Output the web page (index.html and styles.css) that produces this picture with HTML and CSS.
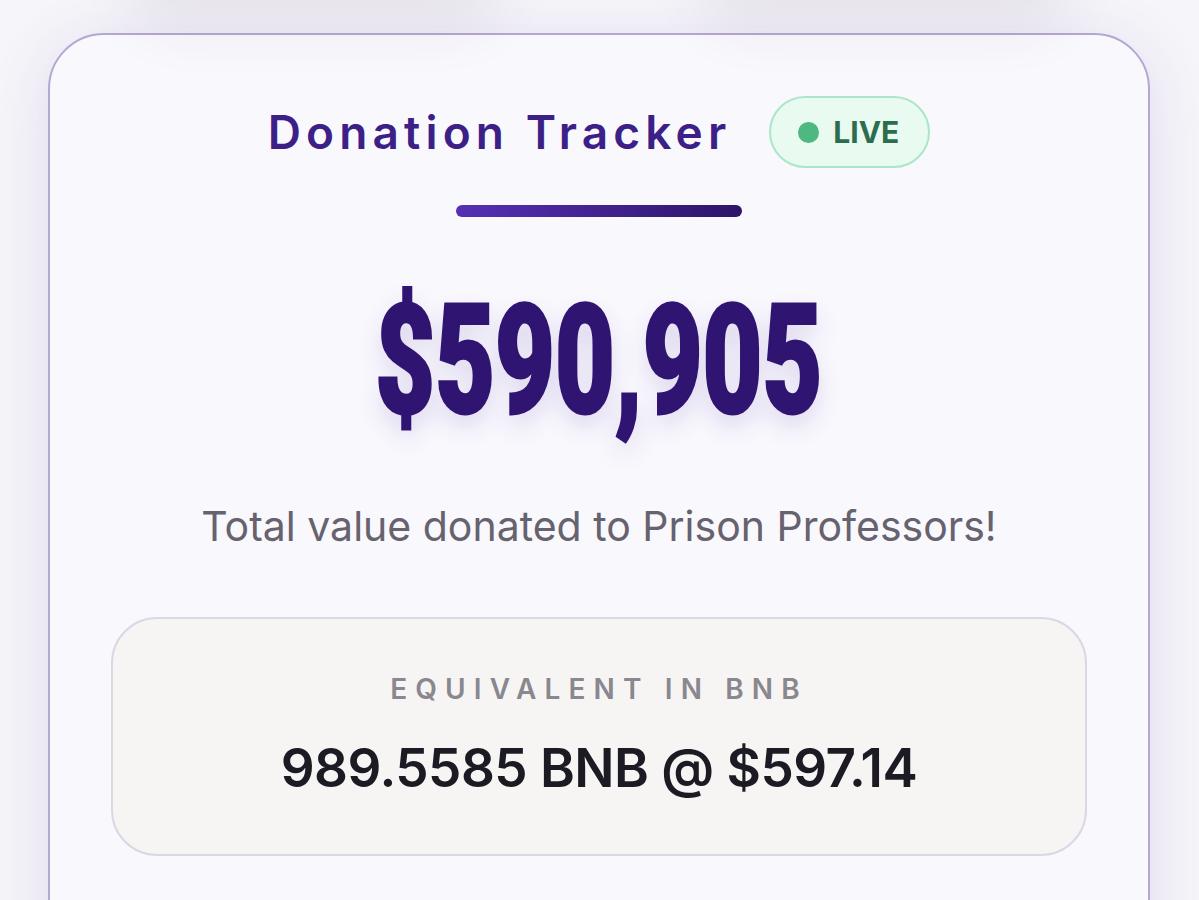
FILE: index.html
```html
<!doctype html>
<html>
  <head>
    <title>Donation Tracker</title>
    <link rel="stylesheet" href="styles.css">
  </head>
  <body>
    <!-- Cards above, scrolled mostly out of view. -->
    <div class="above">
      <div class="above-card"></div>
      <div class="above-card"></div>
    </div>

    <div class="tracker">
      <div class="tracker-head">
        <h2 class="tracker-title">Donation Tracker</h2>
        <div class="live"><span class="live-dot"></span>LIVE</div>
      </div>
      <div class="tracker-bar"></div>

      <div class="total">$590,905</div>
      <p class="total-caption">Total value donated to Prison Professors!</p>

      <div class="equiv">
        <div class="equiv-label">EQUIVALENT IN BNB</div>
        <div class="equiv-value">989.5585 BNB @ $597.14</div>
      </div>
    </div>
  </body>
</html>
```

FILE: styles.css
```css
* { margin: 0; padding: 0; box-sizing: border-box; }
html, body {
  width: 100%;
  height: 100%;
  overflow: hidden;
  background: #f6f5f9;
  font-family: Inter, "Open Sans", sans-serif;
}
.above {
  display: flex;
  gap: 200px;
  padding: 0 130px;
  margin-top: -90px;
  height: 90px;
}
.above-card {
  flex: 1;
  border-radius: 40px;
  background: #f6f5f9;
  box-shadow: 0 26px 56px rgba(60, 55, 80, 0.08);
}
.tracker {
  margin: 33px 49px 0 48px;
  height: 1000px;
  padding-top: 61px;
  border: 2px solid #b4a7d0;
  border-radius: 56px;
  background: #f9f8fd;
  box-shadow: 0 10px 60px rgba(110, 80, 190, 0.16);
  display: flex;
  flex-direction: column;
  align-items: center;
}
.tracker-head {
  display: flex;
  align-items: center;
  gap: 38px;
}
.tracker-title {
  font-size: 46px;
  font-weight: 600;
  letter-spacing: 0.112em;
  color: #3d1f88;
}
.live {
  display: flex;
  align-items: center;
  gap: 14px;
  height: 72px;
  padding: 0 29px 0 27px;
  border: 2px solid #abe6c8;
  border-radius: 36px;
  background: #e9faf1;
  color: #2e6c4e;
  font-size: 30px;
  font-weight: 700;
}
.live-dot {
  width: 21px;
  height: 21px;
  border-radius: 50%;
  background: #4db87f;
}
.tracker-bar {
  margin-top: 37px;
  width: 286px;
  height: 12px;
  border-radius: 6px;
  background: linear-gradient(to right, #5630b5, #2e1568);
}
.total {
  margin-top: 68px;
  font-family: Roboto, sans-serif;
  font-size: 152px;
  font-weight: 900;
  line-height: 1;
  color: #2f1472;
  -webkit-text-stroke: 3px #2f1472;
  transform: scaleX(0.68);
  text-shadow: 0 12px 30px rgba(90, 60, 170, 0.18);
}
.total-caption {
  margin-top: 64px;
  font-size: 41px;
  font-weight: 400;
  color: #66626e;
}
.equiv {
  margin-top: 66px;
  width: 976px;
  height: 239px;
  border: 2px solid #dcd7e4;
  border-radius: 46px;
  background: #f6f5f4;
  display: flex;
  flex-direction: column;
  align-items: center;
  padding-top: 53px;
}
.equiv-label {
  font-size: 28px;
  font-weight: 600;
  letter-spacing: 0.29em;
  color: #8a878f;
}
.equiv-value {
  margin-top: 30px;
  font-size: 53px;
  font-weight: 600;
  letter-spacing: -0.01em;
  color: #1c1a22;
}
```
